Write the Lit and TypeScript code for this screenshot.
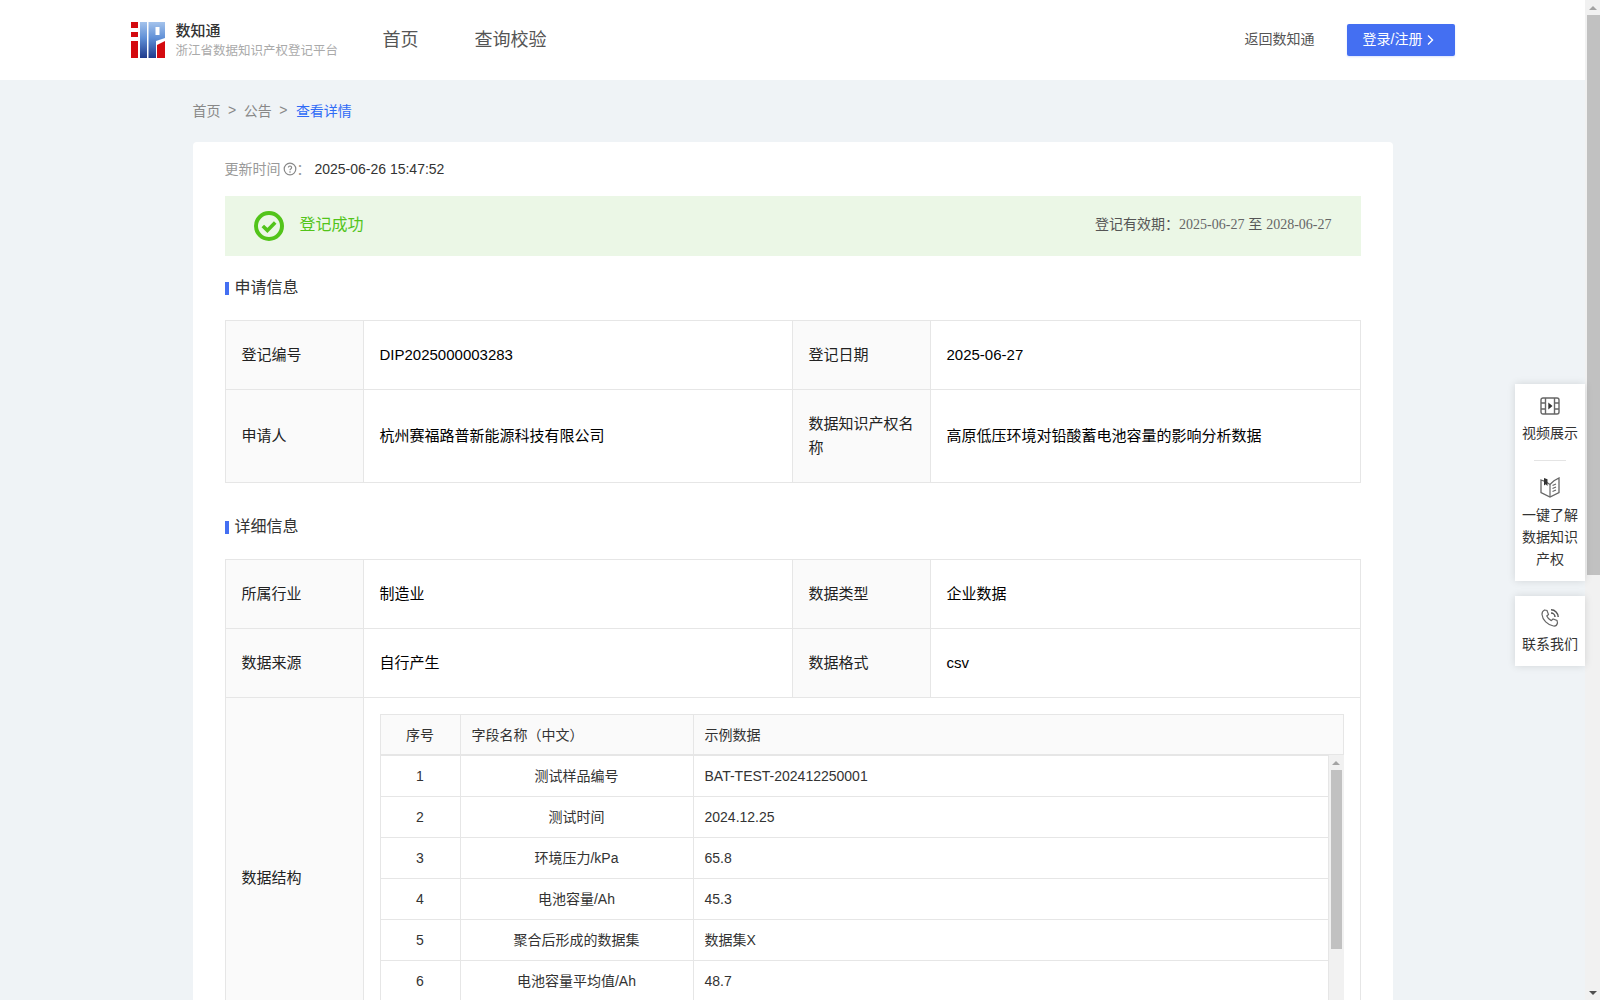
import { LitElement, html, css } from "lit";
import { customElement } from "lit/decorators.js";

const FIELDS: [string, string][] = [
  ["测试样品编号", "BAT-TEST-202412250001"],
  ["测试时间", "2024.12.25"],
  ["环境压力/kPa", "65.8"],
  ["电池容量/Ah", "45.3"],
  ["聚合后形成的数据集", "数据集X"],
  ["电池容量平均值/Ah", "48.7"],
];

@customElement("app-root")
export class AppRoot extends LitElement {
  static styles = css`
    :host {
      display: flex;
      position: relative;
      height: 100vh;
      overflow: hidden;
      background: #eff3f6;
      font-family: "Liberation Sans", "Noto Sans CJK SC", sans-serif;
      font-size: 14px;
      color: #333;
    }
    .page { flex: 1; min-width: 0; height: 100vh; overflow: hidden; }
    .sb { width: 15px; flex: none; background: #f1f1f1; display: flex; flex-direction: column; align-items: flex-end; }
    .sb .up, .sb .down { width: 15px; height: 15px; flex: none; display: flex; align-items: center; justify-content: center; }
    .sb .up::before { content: ""; border: 4px solid transparent; border-top: 0; border-bottom: 4px solid #a3a3a3; }
    .sb .down { margin-top: auto; }
    .sb .down::before { content: ""; border: 4px solid transparent; border-bottom: 0; border-top: 4px solid #505050; }
    .sb .thumb { width: 13px; height: 560px; background: #c1c1c1; flex: none; }
    .sb.small { height: 287px; align-items: center; }
    .sb.small .thumb { width: 11px; height: 179px; }

    header { height: 80px; background: #fff; }
    .head-in { width: 1324px; margin: 0 auto; height: 76px; padding-bottom: 4px; display: flex; align-items: center; }
    .logo { display: block; width: 34px; height: 36px; margin: 4px 11px 0 0; flex: none; }
    .brand { width: 207px; flex: none; margin-top: 5px; }
    .brand b { display: block; font-weight: 500; font-size: 15px; line-height: 20px; color: #333; }
    .brand span { display: block; font-size: 12.5px; line-height: 20px; color: #aaa; white-space: nowrap; }
    .nav { display: flex; gap: 56px; font-size: 18px; color: #555; }
    .spacer { flex: 1; }
    .back { color: #555; margin-right: 32px; }
    .login {
      width: 108px; height: 32px; margin-top: 4px; border-radius: 2px; background: #446ff2; color: #fff;
      box-sizing: border-box; padding-right: 4px;
      display: flex; align-items: center; justify-content: center; gap: 4px;
      box-shadow: 0 1px 2px rgba(68, 111, 242, .2);
    }
    .login span { margin-top: -4px; }
    main { width: 1200px; margin: 0 auto; }
    .crumb { height: 60px; padding-bottom: 2px; display: flex; align-items: center; color: #888; }
    .crumb i { font-style: normal; margin: 0 7.5px; }
    .crumb em { font-style: normal; color: #2f6bf6; margin-left: 1px; }
    .card { background: #fff; border-radius: 4px; padding: 16px 32px 40px; }
    .upd { height: 22px; line-height: 22px; color: #999; display: flex; align-items: center; margin-bottom: 16px; }
    .upd svg { margin: 0 0 0 2px; }
    .upd span { color: #333; }
    .alert { height: 60px; background: #ebf7e6; display: flex; align-items: center; padding: 0 29px 0 29px; }
    .alert svg { display: block; margin-right: 16px; }
    .alert b { font-weight: 400; font-size: 16px; color: #52c41a; flex: 1; margin-top: -7px; }
    .alert .valid { color: #555; margin-top: -7px; }
    .alert .date { font-family: "Liberation Serif", serif; color: #666; }
    h3 {
      margin: 0; font-weight: 400; font-size: 16px; color: #333; line-height: 24px;
      display: flex; align-items: center; gap: 6px;
    }
    h3::before { content: ""; width: 4px; height: 13px; background: #446ff2; }
    .s1 { margin: 20px 0 20px; }
    .s2 { margin: 32px 0 20px; }
    table { border-collapse: collapse; table-layout: fixed; width: 1136px; }
    td { border: 1px solid #e6e6e6; padding: 0 16px; line-height: 24px; font-size: 15px; color: #000; }
    td.l { background: #fafafa; color: #222; }
    tr.h69 { height: 69px; }
    tr.h93 { height: 93px; }
    td.inner { padding: 16px; }
    table.ntable { width: 964px; }
    .ntable th, .ntable td {
      border: 1px solid #e6e6e6; height: 40px; box-sizing: border-box; padding: 0 11px;
      font-weight: 400; font-size: 14px; text-align: left; color: #333; line-height: 20px;
    }
    .ntable th { background: #fafafa; }
    .ntable .c { text-align: center; }
    .body-scroll { height: 287px; overflow: hidden; width: 964px; display: flex; }
    .rows { flex: none; width: 949px; height: 287px; overflow: hidden; }
    .rows table.ntable { width: 949px; }
    .rows td { height: 41px; }
    .rows tr:first-child td { border-top: 0; }
    .side { position: absolute; right: 15px; top: 384px; width: 70px; display: flex; flex-direction: column; gap: 15px; color: #333; }
    .box {
      background: #fff; box-shadow: 0 0 8px rgba(0, 0, 0, .12); display: flex; flex-direction: column;
      align-items: center; text-align: center; line-height: 22px;
    }
    .box svg { display: block; flex: none; }
    .b1 { height: 197px; padding-top: 13px; box-sizing: border-box; }
    .b2 { height: 70px; padding-top: 12px; box-sizing: border-box; }
    .box hr { width: 32px; height: 1px; border: 0; background: #e4e4e4; margin: 16px 0 16px; flex: none; }
    .box .t { width: 56px; margin-top: 7px; }
    .box .t.more { margin-top: 6px; }
    .b2 .t { margin-top: 5px; }
  `;

  logo() {
    return html`<svg class="logo" viewBox="0 0 34 36" aria-label="logo">
      <defs>
        <linearGradient id="bl" x1="0" y1="0" x2="0" y2="1">
          <stop offset="0" stop-color="#a4c3ec" /><stop offset=".45" stop-color="#5f8fd6" /><stop offset="1" stop-color="#1f3a8c" />
        </linearGradient>
      </defs>
      <path fill="#d40a0f" d="M0 0h7v6H0zM0 10h7v5H0zM0 19h7v17H0z" />
      <rect x="9" width="7" height="36" fill="url(#bl)" />
      <path fill="url(#bl)" fill-rule="evenodd" d="M17.500 0H34v16l-9 3v17h-7.500zM24.500 5v8h4V5z" />
      <path fill="#d40a0f" d="M26 23l8-4v17h-8z" />
    </svg>`;
  }

  render() {
    return html`<div class="page">
        <header>
          <div class="head-in">
            ${this.logo()}
            <div class="brand"><b>数知通</b><span>浙江省数据知识产权登记平台</span></div>
            <nav class="nav"><span>首页</span><span>查询校验</span></nav>
            <div class="spacer"></div>
            <span class="back">返回数知通</span>
            <div class="login">
              <span>登录/注册</span>
              <svg width="8" height="12" viewBox="0 0 8 12"><path d="M2 1.500 6.500 6 2 10.500" fill="none" stroke="#fff" stroke-width="1.4" /></svg>
            </div>
          </div>
        </header>
        <main>
          <div class="crumb">首页<i>&gt;</i>公告<i>&gt;</i><em>查看详情</em></div>
          <div class="card">
            <div class="upd">更新时间
              <svg width="14" height="14" viewBox="0 0 14 14">
                <circle cx="7" cy="7" r="5.800" fill="none" stroke="#888" stroke-width="1.200" />
                <path d="M5.400 5.600a1.600 1.600 0 1 1 2.400 1.400c-.5.3-.8.6-.8 1.200" fill="none" stroke="#888" stroke-width="1.200" />
                <circle cx="7" cy="10" r=".8" fill="#888" />
              </svg>：&nbsp;<span>2025-06-26 15:47:52</span>
            </div>
            <div class="alert">
              <svg width="30" height="30" viewBox="0 0 30 30">
                <circle cx="15" cy="15" r="13" fill="none" stroke="#52c41a" stroke-width="4" />
                <path d="M8.800 15l4.600 4.400 7.800-7.800" fill="none" stroke="#52c41a" stroke-width="3.600" />
              </svg>
              <b>登记成功</b>
              <span class="valid">登记有效期：<span class="date">2025-06-27</span> 至 <span class="date">2028-06-27</span></span>
            </div>
            <h3 class="s1">申请信息</h3>
            <table>
              <colgroup><col style="width:138px" /><col style="width:429px" /><col style="width:138px" /><col /></colgroup>
              <tr class="h69"><td class="l">登记编号</td><td>DIP2025000003283</td><td class="l">登记日期</td><td>2025-06-27</td></tr>
              <tr class="h93"><td class="l">申请人</td><td>杭州赛福路普新能源科技有限公司</td><td class="l">数据知识产权名称</td><td>高原低压环境对铅酸蓄电池容量的影响分析数据</td></tr>
            </table>
            <h3 class="s2">详细信息</h3>
            <table>
              <colgroup><col style="width:138px" /><col style="width:429px" /><col style="width:138px" /><col /></colgroup>
              <tr class="h69"><td class="l">所属行业</td><td>制造业</td><td class="l">数据类型</td><td>企业数据</td></tr>
              <tr class="h69"><td class="l">数据来源</td><td>自行产生</td><td class="l">数据格式</td><td>csv</td></tr>
              <tr>
                <td class="l">数据结构</td>
                <td colspan="3" class="inner">
                  <table class="ntable">
                    <colgroup><col style="width:80px" /><col style="width:233px" /><col /></colgroup>
                    <tr><th class="c">序号</th><th>字段名称（中文）</th><th>示例数据</th></tr>
                  </table>
                  <div class="body-scroll">
                    <div class="rows">
                      <table class="ntable">
                        <colgroup><col style="width:80px" /><col style="width:233px" /><col /></colgroup>
                        ${FIELDS.map(
                          (f, i) => html`<tr><td class="c">${i + 1}</td><td class="c">${f[0]}</td><td>${f[1]}</td></tr>`
                        )}
                      </table>
                    </div>
                    <div class="sb small"><div class="up"></div><div class="thumb"></div></div>
                  </div>
                </td>
              </tr>
            </table>
          </div>
        </main>
      </div>
      <div class="sb"><div class="up"></div><div class="thumb"></div><div class="down"></div></div>
      <aside class="side">
        <div class="box b1">
          <svg width="20" height="18" viewBox="0 0 20 18">
            <rect x="1" y="1" width="18" height="16" rx="2" fill="none" stroke="#666" stroke-width="1.400" />
            <path d="M5.500 1v16M14.500 1v16M1 6h4.500M1 12h4.500M14.500 6H19M14.500 12H19" stroke="#666" stroke-width="1.400" fill="none" />
            <path d="M8.300 5.500l4.200 3.500-4.200 3.500z" fill="#333" />
          </svg>
          <div class="t">视频展示</div>
          <hr />
          <svg width="20" height="21" viewBox="0 0 20 21">
            <path d="M1 3l4 1.300 5 3.200 4-3.700 5-2.800v14.500L10 20 1 15.500z" fill="none" stroke="#666" stroke-width="1.300" />
            <path d="M4 1v7.500l1.700-1.200L7.500 9V2.300z" fill="#333" />
            <path d="M10 7.500V20M12.500 8.500l3.500-1.500M12.500 11.500l3.500-1.500M12.500 14.500l3.500-1.500" fill="none" stroke="#666" stroke-width="1.200" />
          </svg>
          <div class="t more">一键了解数据知识产权</div>
        </div>
        <div class="box b2">
          <svg width="20" height="20" viewBox="0 0 20 20">
            <path d="M4.500 2 7 2.500l1.500 4-1.700 1.500c.8 2 2.400 3.600 4.500 4.600L13 11l4 1.500.5 2.500c-.5 2-2 3.300-4 3C7.500 17 2.500 12 2 6.500 1.900 4.500 3 2.800 4.500 2z" fill="none" stroke="#666" stroke-width="1.200" />
            <path d="M11 1.800a7.200 7.200 0 0 1 7.200 7.200M11 5a4 4 0 0 1 4 4" fill="none" stroke="#555" stroke-width="1.500" />
          </svg>
          <div class="t">联系我们</div>
        </div>
      </aside>`;
  }
}
